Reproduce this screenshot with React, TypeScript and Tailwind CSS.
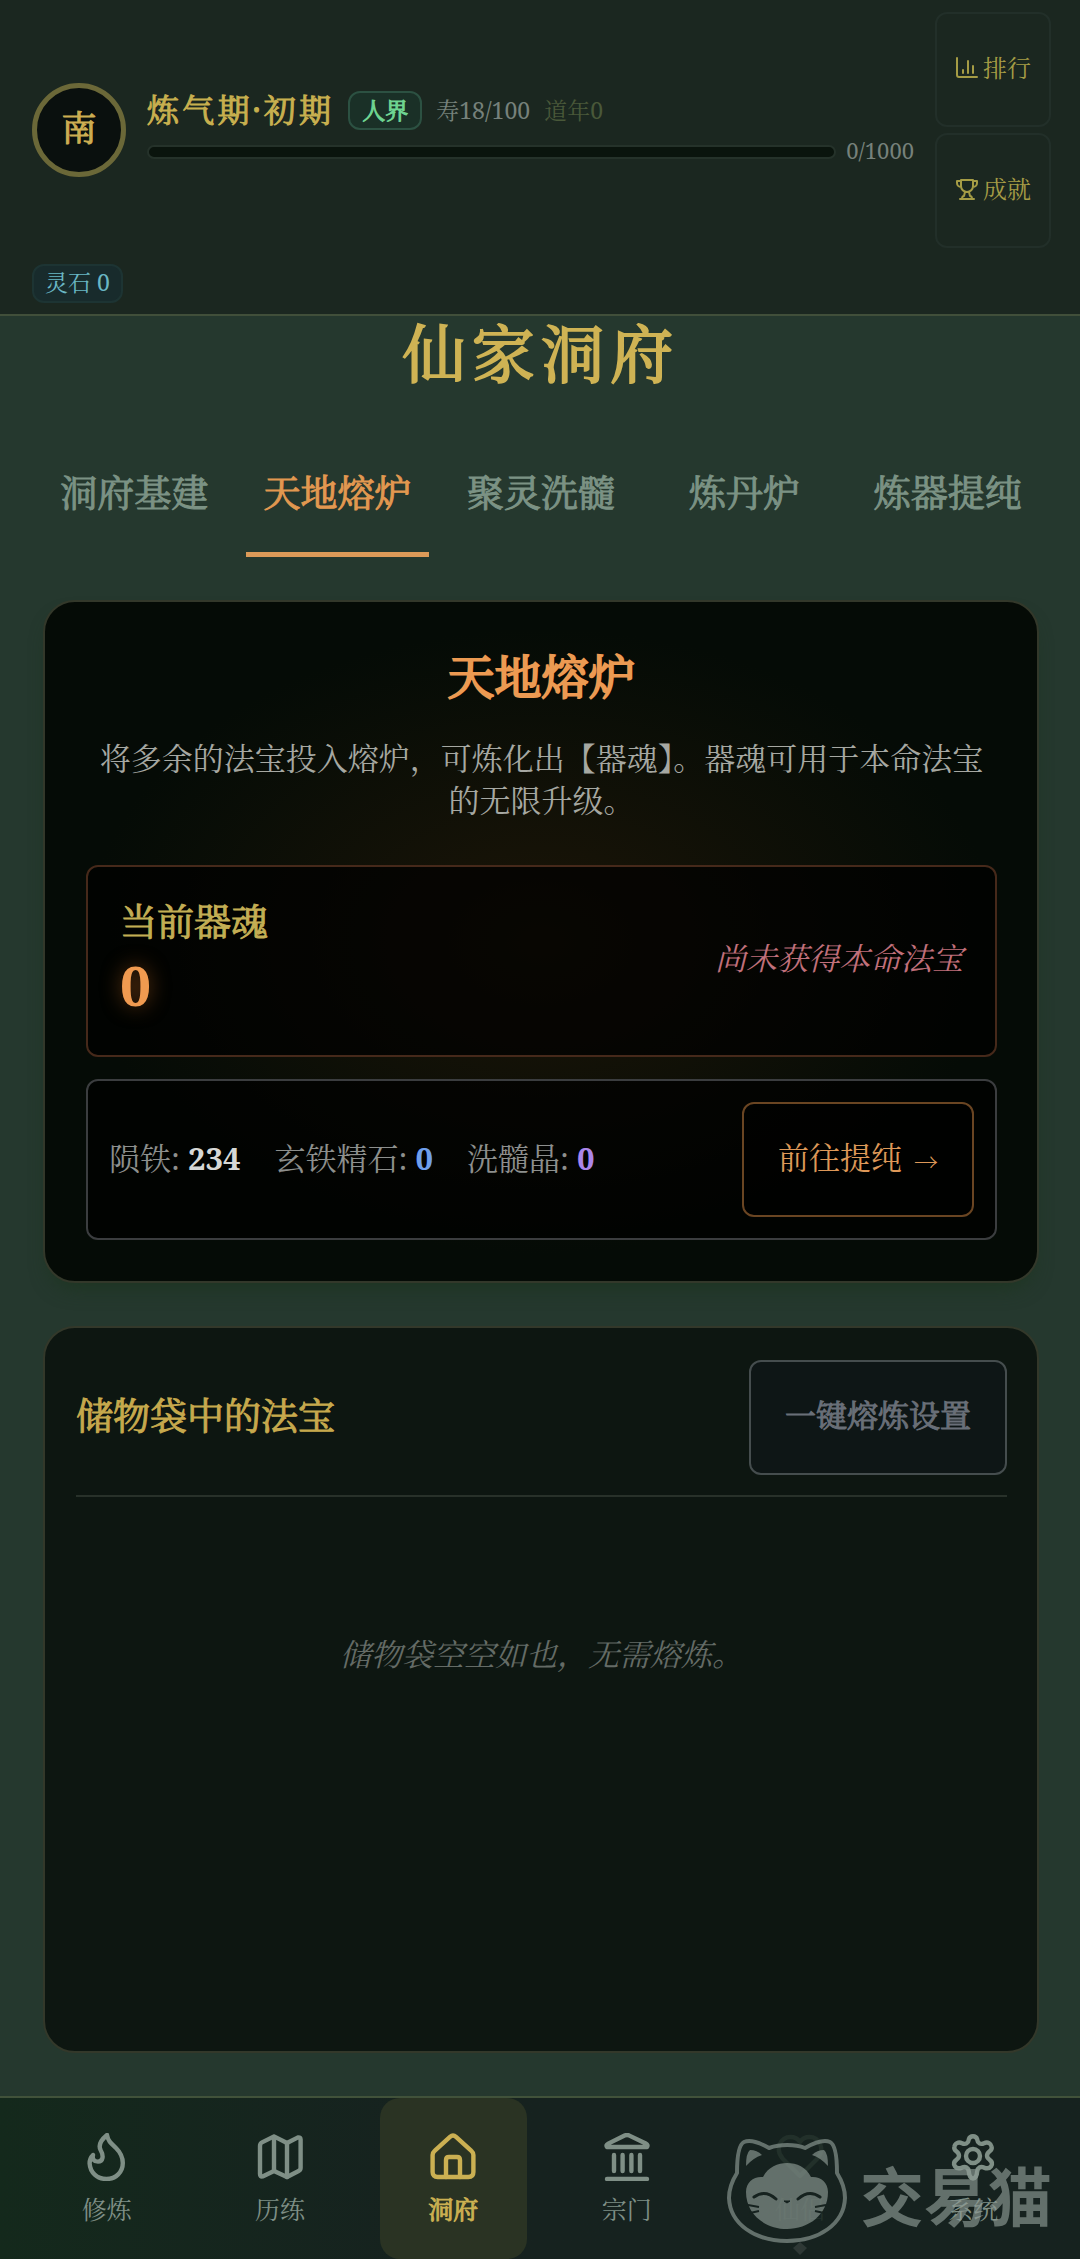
import type { ReactNode } from "react";

const TABS = ["洞府基建", "天地熔炉", "聚灵洗髓", "炼丹炉", "炼器提纯"];
const ACTIVE_TAB = "天地熔炉";

const MATERIALS = [
  { name: "陨铁", count: 234, color: "text-[#d6d8d6]" },
  { name: "玄铁精石", count: 0, color: "text-[#6f9fec]" },
  { name: "洗髓晶", count: 0, color: "text-[#ab86ea]" },
];

function Icon({ children, className, strokeWidth = 2 }: { children: ReactNode; className?: string; strokeWidth?: number }) {
  return (
    <svg viewBox="0 0 24 24" fill="none" stroke="currentColor" strokeWidth={strokeWidth}
      strokeLinecap="round" strokeLinejoin="round" className={className} aria-hidden="true">
      {children}
    </svg>
  );
}

const NAV = [
  {
    label: "修炼",
    icon: <path d="M12 1C9 3.500 7.500 6 8.800 8.500 10.500 11.500 10 14.300 7.500 14.300 5.500 14.300 4.500 13 5 11 3.500 12.500 3.300 14 3.300 15.200 3.600 19.800 7 23 11.700 23 16.500 23 19.900 19.500 19.900 15 19.900 12 18.500 9.500 16.500 7.500 14 5.200 12.500 4 12 1Z" />,
  },
  {
    label: "历练",
    icon: (
      <>
        <path d="M2 6.500Q2 5.200 3 4.700L9 1.700 15.500 5 21 2.200Q22.300 2 22.300 3.300V17.500Q22.300 18.500 21.300 19L15.500 22 9 19 3.300 21.700Q2 22 2 20.500Z" />
        <path d="M9 2v17M15.500 5v17" />
      </>
    ),
  },
  {
    label: "洞府",
    icon: (
      <>
        <path d="M1.800 11c0-1 .3-1.500 1-2.100l7.700-7c1-.9 2-.9 3 0l7.700 7c.7.600 1 1.100 1 2.100v8.500c0 1.600-.9 2.500-2.500 2.500H4.300c-1.600 0-2.500-.9-2.500-2.500Z" />
        <path d="M8.500 22v-8.500c0-1 .5-1.500 1.500-1.500h4c1 0 1.500.5 1.500 1.500V22" />
      </>
    ),
  },
  {
    label: "宗门",
    icon: (
      <>
        <path d="M2 23h20M5.500 11v8M9.800 11v8M14.200 11v8M18.500 11v8" />
        <path d="M2 7c-.5-.7-.2-1.300.6-1.700l8.200-4c.8-.4 1.600-.4 2.400 0l8.200 4c.8.4 1.100 1 .6 1.700Z" />
      </>
    ),
  },
  {
    label: "仙侣",
    faded: true,
    icon: <path d="M12 21.500 3.500 13C-1 8 2.500 2 7.300 2 9.500 2 11 3 12 4.500 13 3 14.500 2 16.700 2 21.500 2 25 8 20.500 13Z" />,
  },
  {
    label: "系统",
    icon: (
      <>
        <path d="M9.900 3.200a2.200 2.200 0 0 1 4.200 0c.2 1.900 1.700 2.700 3.400 1.900 1.900-.9 3.600.2 3.800 1.800.3 1-.3 1.700-1.100 2.300-1.600 1.200-1.600 2.900 0 4.100 1.700 1.200 1.400 2.500.8 3.400-.8 1.100-2 1.200-3.500.6-1.700-.8-3.200 0-3.400 1.900-.3 4.700-3.900 4.700-4.200 0-.2-1.900-1.700-2.700-3.400-1.900-1.500.6-2.700.5-3.500-.6-.6-.9-.9-2.200.8-3.400 1.600-1.200 1.600-2.900 0-4.100C3 8.600 2.400 7.900 2.700 6.900c.2-1.600 1.900-2.700 3.800-1.800 1.700.8 3.200 0 3.400-1.900Z" />
        <circle cx="12" cy="11.500" r="3.500" />
      </>
    ),
  },
];

function ShortcutButton({ label, children }: { label: string; children: ReactNode }) {
  return (
    <button className="flex h-[115px] w-[116px] items-center justify-center gap-1 rounded-xl border-2 border-[#222f29] pb-1 text-[24px] leading-8 text-[#a59c45]">
      <Icon className="size-6">{children}</Icon>
      {label}
    </button>
  );
}

function StatusHeader() {
  return (
    <header className="border-b-2 border-[#414f3a] bg-[#1b2720] pt-3 pr-[29px] pb-[11px] pl-8">
      <div className="flex items-center gap-[21px]">
        <div className="flex size-[94px] shrink-0 items-center justify-center rounded-full border-[5px] border-[#6b6838] bg-[#0a100e] pb-1 text-[35px] text-[#cdae52] [-webkit-text-stroke:1px]">
          南
        </div>
        <div className="flex-1 pb-1">
          <div className="flex items-center gap-[14px]">
            <h2 className="text-[32px] leading-10 tracking-widest text-[#c8b04f] [-webkit-text-stroke:1px]">炼气期·初期</h2>
            <span className="rounded-xl border-2 border-[#2c5142] bg-[#1a3027] px-3 text-[23px] leading-[35px] text-[#6fd592] [-webkit-text-stroke:1px]">人界</span>
            <span className="text-[23px] text-[#76817b]">寿18/100</span>
            <span className="text-[23px] text-[#495839]">道年0</span>
          </div>
          <div className="mt-1 flex items-center gap-[10px]">
            <div role="progressbar" aria-label="修为" aria-valuenow={0} aria-valuemax={1000}
              className="mt-1 h-[14px] flex-1 rounded-full border-2 border-[#25322a] bg-[#0a140d]" />
            <span className="text-[22px] leading-8 text-[#76817b]">0/1000</span>
          </div>
        </div>
        <div className="flex flex-col gap-[6px]">
          <ShortcutButton label="排行">
            <path d="M2 2v17a2 2 0 0 0 2 2h18M8 17v-3M13 17V5M18 17v-7" />
          </ShortcutButton>
          <ShortcutButton label="成就">
            <path d="M6 3h12v6a6 6 0 0 1-12 0ZM6 4H2v2a4 4 0 0 0 4 4M18 4h4v2a4 4 0 0 1-4 4M10 15l-1 4c-1 0-2 1-2 3M14 15l1 4c1 0 2 1 2 3M5 22h14" />
          </ShortcutButton>
        </div>
      </div>
      <span className="mt-4 inline-block rounded-xl border-2 border-[#1d3433] bg-[#182b2c] px-[11px] pb-[2px] text-[23px] leading-[33px] text-[#6ab7c4]">
        灵石 0
      </span>
    </header>
  );
}

function FurnaceCard() {
  return (
    <section className="rounded-[32px] border-2 border-[#33382a] bg-[#050b06] bg-radial from-[#1c1507] to-[#050b06] to-65% pt-10 pr-10 pb-[41px] pl-[41px] shadow-[0_12px_20px_-8px_#1d3520]">
      <h2 className="text-center text-[47px] leading-[68px] text-[#ec9a52] [-webkit-text-stroke:2px]">天地熔炉</h2>
      <p className="mt-[27px] text-center text-[31px] leading-[42px] text-[#a6a8a2]">
        将多余的法宝投入熔炉，可炼化出【器魂】。器魂可用于本命法宝的无限升级。
      </p>
      <div className="mt-11 flex items-center justify-between rounded-xl border-2 border-[#46291a] bg-black/70 pt-7 pr-8 pb-[34px] pl-8">
        <div>
          <h3 className="text-[37px] leading-[54px] text-[#c3ae54] [-webkit-text-stroke:1px]">当前器魂</h3>
          <p className="text-[55px] leading-[72px] font-bold text-[#f09a50] [text-shadow:0_0_20px_#6a3a14]">0</p>
        </div>
        <p className="text-[31px] text-[#c0707b] italic">尚未获得本命法宝</p>
      </div>
      <div className="mt-[22px] flex items-center justify-between rounded-xl border-2 border-[#3b3d3f] bg-black/70 p-[21px]">
        <ul className="flex gap-[34px] pb-[2px] text-[31px] text-[#8d8f8d]">
          {MATERIALS.map((m) => (
            <li key={m.name}>
              {m.name}: <span className={`font-bold ${m.color}`}>{m.count}</span>
            </li>
          ))}
        </ul>
        <button className="flex h-[115px] items-center gap-3 rounded-xl border-2 border-[#6a4522] bg-black/40 px-[34px] pb-1 text-[31px] text-[#dd9858]">
          前往提纯
          <span className="pt-2 text-[24px]">→</span>
        </button>
      </div>
    </section>
  );
}

function StorageCard() {
  return (
    <section className="mt-[43px] flex flex-1 flex-col rounded-[32px] border-2 border-[#33382a] bg-[#0d1611] py-8 pr-[30px] pl-[31px]">
      <div className="flex items-center justify-between border-b-2 border-[#28312a] pb-5">
        <h3 className="pb-1 text-[37px] text-[#c6a94d] [-webkit-text-stroke:1px]">储物袋中的法宝</h3>
        <button className="h-[115px] rounded-xl border-2 border-[#454d4e] bg-[#0e1616] px-[34px] pb-1 text-[31px] text-[#696f78] [-webkit-text-stroke:1px]">
          一键熔炼设置
        </button>
      </div>
      <p className="mt-[134px] text-center text-[31px] leading-[46px] text-[#646b66] italic">储物袋空空如也，无需熔炼。</p>
    </section>
  );
}

function Watermark() {
  return (
    <div className="pointer-events-none absolute right-7 bottom-4 flex items-center gap-[14px] text-[#8d9a94] opacity-65">
      <svg viewBox="0 0 118 104" className="h-[104px] w-[118px] overflow-visible" fill="none" aria-hidden="true">
        <path d="M9 34 C9 20 10 6 16 3 C23 0 34 5 41 9 C52 5 67 5 77 9 C84 5 95 0 102 3 C108 6 109 20 109 34 C114 42 117 49 117 59 C116 85 91 102 59 102 C27 102 2 85 1 59 C1 49 4 42 9 34 Z"
          stroke="currentColor" strokeWidth="4" strokeLinejoin="round" />
        <path d="M18 27 Q18 14 22 11 Q29 11 34 16 Q25 19 18 27ZM100 27 Q100 14 96 11 Q89 11 84 16 Q93 19 100 27Z" fill="currentColor" />
        <path d="M18 53 C18 43 26 37 35 38 C40 28 50 24 59 24 C69 24 78 28 83 38 C92 37 100 43 100 53 C100 76 80 90 59 90 C38 90 18 76 18 53Z" fill="currentColor" />
        <path d="M26 58 Q37 50 48 60 M70 60 Q81 50 92 58" stroke="#16221f" strokeWidth="3" strokeLinecap="round" />
        <path d="M56 62h6l-3 2Z" fill="#16221f" stroke="#16221f" strokeWidth="1" />
        <path d="M20 66l11 2M22 74l9-2M98 66l-11 2M96 74l-9-2" stroke="#16221f" strokeWidth="2" />
        <path d="M72 103l7 6-7 7-7-7Z" fill="#3b4542" />
      </svg>
      <span className="pt-1 font-['Noto_Sans_CJK_SC',sans-serif] text-[64px] leading-none font-bold">交易猫</span>
    </div>
  );
}

function BottomNav() {
  return (
    <nav className="relative flex h-[163px] justify-around border-t-2 border-[#41523a] bg-linear-to-r from-[#14291c] to-[#16221f] to-40% px-5">
      {NAV.map((item) => {
        const active = item.label === "洞府";
        return (
          <a key={item.label} href="#"
            className={`flex w-[147px] flex-col items-center rounded-[20px] pt-[35px] text-[25px] leading-[38px] ${
              active
                ? "bg-[#2a3323] text-[#cbb052] [-webkit-text-stroke:1px]"
                : item.faded ? "text-[#22302a]" : "text-[#7f8f86]"
            }`}>
            <Icon className="mb-[9px] size-12" strokeWidth={2.2}>{item.icon}</Icon>
            {item.label}
          </a>
        );
      })}
      <Watermark />
    </nav>
  );
}

export default function App() {
  return (
    <div className="flex min-h-screen flex-col bg-[#25382e] font-['Noto_Serif','Noto_Serif_CJK_SC','Liberation_Serif','Noto_Sans_CJK_SC',serif]">
      <StatusHeader />
      <main className="flex flex-1 flex-col pr-[41px] pb-[43px] pl-[43px]">
        <h1 className="text-center text-[63px] leading-[74px] tracking-widest text-[#cfb354] [-webkit-text-stroke:2px]">仙家洞府</h1>
        <div role="tablist" className="mt-9 mb-[43px] grid grid-cols-5 gap-[21px]">
          {TABS.map((tab) => (
            <button key={tab} role="tab" aria-selected={tab === ACTIVE_TAB}
              className={`h-[131px] border-b-[5px] pt-2 text-[37px] whitespace-nowrap [-webkit-text-stroke:1px] ${
                tab === ACTIVE_TAB ? "border-[#dc9a58] text-[#e29850]" : "border-transparent text-[#7b9284]"
              }`}>
              {tab}
            </button>
          ))}
        </div>
        <FurnaceCard />
        <StorageCard />
      </main>
      <BottomNav />
    </div>
  );
}
